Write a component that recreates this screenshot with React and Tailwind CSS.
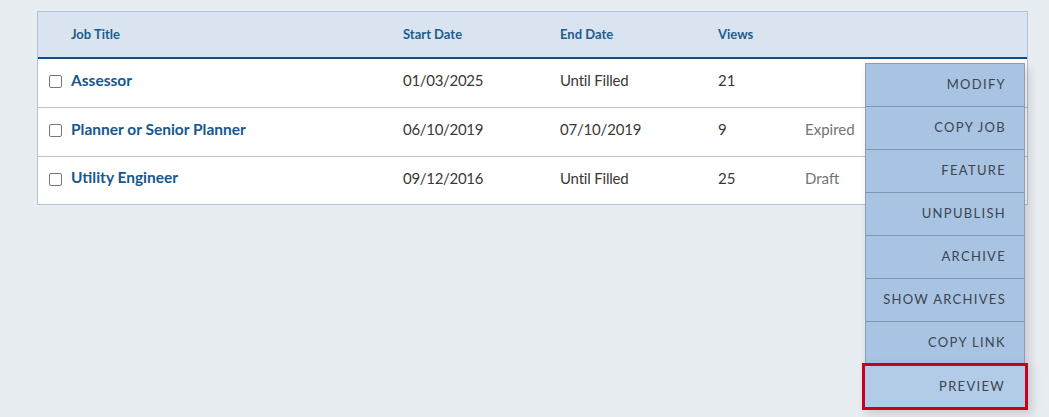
import React from "react";

const jobs = [
    { title: "Assessor", start: "01/03/2025", end: "Until Filled", views: 21, status: "" },
    { title: "Planner or Senior Planner", start: "06/10/2019", end: "07/10/2019", views: 9, status: "Expired" },
    { title: "Utility Engineer", start: "09/12/2016", end: "Until Filled", views: 25, status: "Draft" },
];

const actions = ["Modify", "Copy Job", "Feature", "Unpublish", "Archive", "Show Archives", "Copy Link"];

const cols = "grid grid-cols-[33px_332px_157px_158px_87px_1fr]";

export default function App() {
    return (
        <div className="min-h-[417px] bg-[#e8edf2] pl-[37px] pr-[21px] pt-[11px] font-['Lato','Noto_Sans',sans-serif]">
            <div className="relative">
                <JobTable />
                <ActionMenu />
            </div>
        </div>
    );
}

function JobTable() {
    return (
        <div className="border border-[#b3c2d4] bg-white">
            <div className={`${cols} h-[47px] pt-[1px] items-center bg-[#dae4f0] border-b-2 border-[#0e5089] text-[13px] font-bold text-[#1d5c8e]`}>
                <div />
                <div>Job Title</div>
                <div>Start Date</div>
                <div>End Date</div>
                <div>Views</div>
                <div />
            </div>
            {jobs.map((job, i) => (
                <JobRow key={job.title} job={job} last={i === jobs.length - 1} />
            ))}
        </div>
    );
}

function JobRow({ job, last }) {
    return (
        <div className={`${cols} ${last ? "h-[47px]" : "h-[49px] border-b border-[#b3c2d4]"} pb-[5px] items-center text-[15px] text-[#3a3835]`}>
            <div className="pl-[11px] pt-[2px] flex items-center">
                <span className="w-[13px] h-[13px] rounded-[2px] border border-[#767676] bg-white" />
            </div>
            <div className="font-bold text-[15.5px] text-[#17588d]">{job.title}</div>
            <div className="tracking-[-0.3px]">{job.start}</div>
            <div className="tracking-[-0.2px]">{job.end}</div>
            <div>{job.views}</div>
            <div className="text-[#747474]">{job.status}</div>
        </div>
    );
}

function ActionMenu() {
    return (
        <div className="absolute left-[825px] top-[52px] w-[166px]">
            <div className="mx-[3px] w-[160px] border border-[#8c9db2] border-b-0 bg-[#a8c4e2] shadow-[4px_4px_10px_rgba(0,0,0,0.15)]">
                {actions.map(a => (
                    <div
                        key={a}
                        className="h-[43px] flex items-center justify-end pr-[18px] border-b border-[#8097b0] text-[13px] uppercase tracking-[1.3px] text-[#3c4450]"
                    >
                        {a}
                    </div>
                ))}
            </div>
            <div className="-mt-[2px] h-[47px] border-[3px] border-[#c8001e] bg-[#b2cbe7] flex items-center justify-end pr-[20px] text-[13px] uppercase tracking-[1.3px] text-[#3c4450] shadow-[4px_4px_10px_rgba(0,0,0,0.15)]">
                Preview
            </div>
        </div>
    );
}
